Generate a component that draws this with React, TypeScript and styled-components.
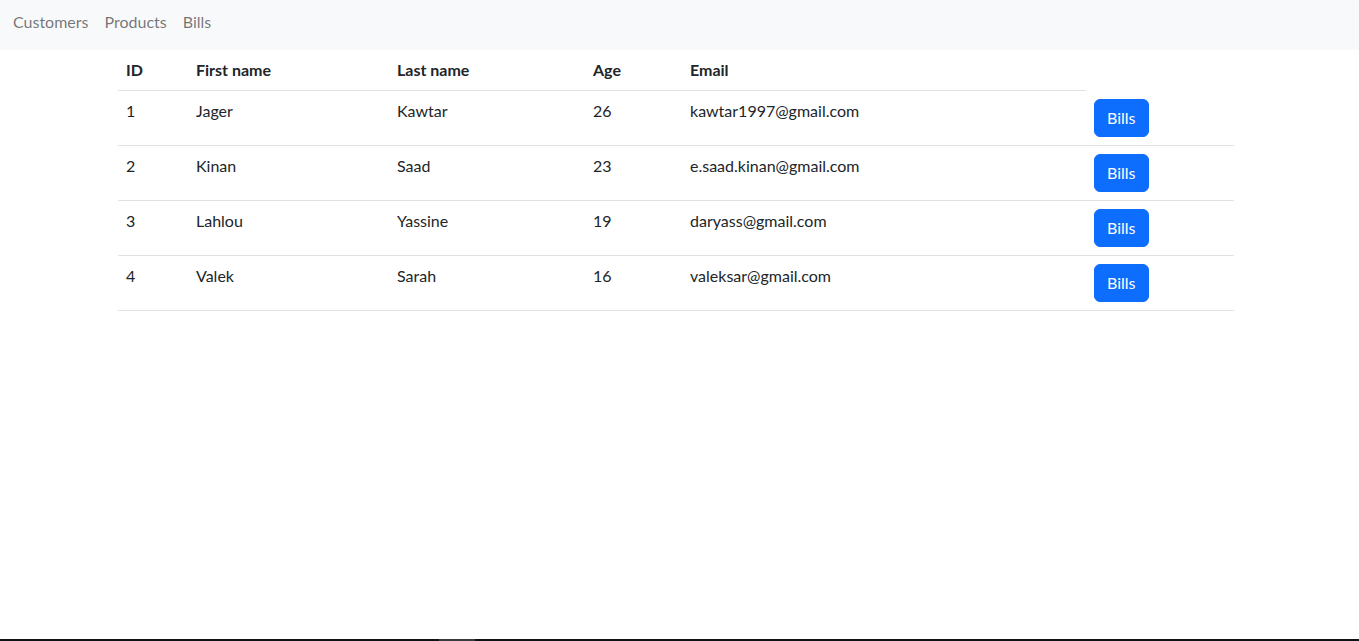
import React from "react";
import styled, { createGlobalStyle } from "styled-components";

const Global = createGlobalStyle`
  html, body { margin: 0; padding: 0; background: #fff; }
  body {
    font-family: "Segoe UI", Lato, "Noto Sans", "Liberation Sans", sans-serif;
    font-size: 16px;
    line-height: 1.5;
    color: #212529;
  }
  * { box-sizing: border-box; }
`;

const NavBar = styled.nav`
  height: 50px;
  background: #f8f9fa;
  display: flex;
  align-items: flex-start;
  padding: 10px 0 0 5px;
`;

const NavLink = styled.a`
  padding: 0 8px;
  color: rgba(0, 0, 0, 0.55);
  text-decoration: none;
  font-size: 16px;
  line-height: 24px;
  cursor: pointer;
`;

const Container = styled.main`
  width: 1116px;
  margin-left: 118px;
`;

const Table = styled.table`
  width: 100%;
  border-collapse: collapse;
  table-layout: fixed;
`;

const Th = styled.th`
  text-align: left;
  font-weight: 700;
  padding: 8px;
  line-height: 24px;
  border-bottom: 1px solid #dee2e6;
  vertical-align: top;
`;

const Td = styled.td`
  padding: 8px;
  line-height: 24px;
  border-bottom: 1px solid #dee2e6;
  vertical-align: top;
`;

const Button = styled.button`
  font-family: inherit;
  font-size: 16px;
  line-height: 24px;
  padding: 6px 12px;
  border: 1px solid #0d6efd;
  border-radius: 6px;
  background: #0d6efd;
  color: #fff;
  cursor: pointer;
`;

const TaskEdge = styled.div`
  position: fixed;
  left: 0;
  right: 0;
  bottom: 0;
  height: 2px;
  background: #111;
  display: flex;
`;

const TaskMark = styled.span`
  margin-left: 439px;
  width: 36px;
  background: #3a3a3a;
`;

const widths = [70, 201, 196, 97, 404, 148];

const customers = [
  { id: 1, first: "Jager", last: "Kawtar", age: 26, email: "kawtar1997@gmail.com" },
  { id: 2, first: "Kinan", last: "Saad", age: 23, email: "e.saad.kinan@gmail.com" },
  { id: 3, first: "Lahlou", last: "Yassine", age: 19, email: "daryass@gmail.com" },
  { id: 4, first: "Valek", last: "Sarah", age: 16, email: "valeksar@gmail.com" },
];

export default function App() {
  return (
    <>
      <Global />
      <NavBar>
        <NavLink>Customers</NavLink>
        <NavLink>Products</NavLink>
        <NavLink>Bills</NavLink>
      </NavBar>
      <Container>
        <Table>
          <colgroup>
            {widths.map((w, i) => (
              <col key={i} style={{ width: w }} />
            ))}
          </colgroup>
          <thead>
            <tr>
              <Th>ID</Th>
              <Th>First name</Th>
              <Th>Last name</Th>
              <Th>Age</Th>
              <Th>Email</Th>
            </tr>
          </thead>
          <tbody>
            {customers.map((c) => (
              <tr key={c.id}>
                <Td>{c.id}</Td>
                <Td>{c.first}</Td>
                <Td>{c.last}</Td>
                <Td>{c.age}</Td>
                <Td>{c.email}</Td>
                <Td>
                  <Button>Bills</Button>
                </Td>
              </tr>
            ))}
          </tbody>
        </Table>
      </Container>
      <TaskEdge>
        <TaskMark />
      </TaskEdge>
    </>
  );
}
